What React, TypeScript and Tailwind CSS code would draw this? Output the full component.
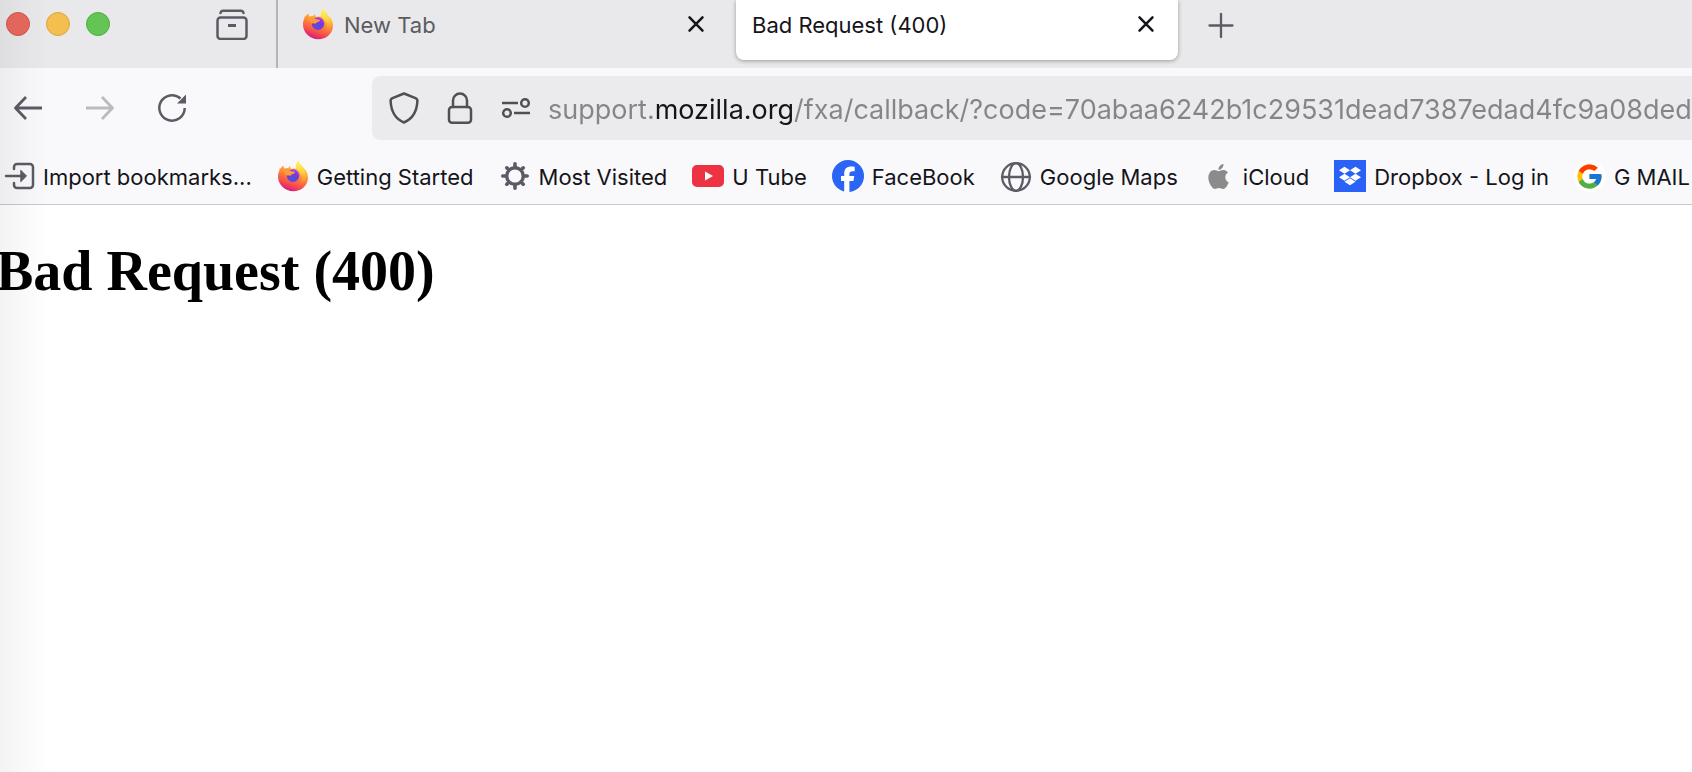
import { useId, type ReactNode } from "react";
import { SiApple, SiDropbox } from "react-icons/si";
import { FcGoogle } from "react-icons/fc";

const pageUrl =
  "support.mozilla.org/fxa/callback/?code=70abaa6242b1c29531dead7387edad4fc9a08ded";

function FirefoxLogo() {
  const id = useId();

  return (
    <svg viewBox="0 0 32 32" className="h-8 w-8 shrink-0" aria-hidden="true">
      <defs>
        <linearGradient id={`${id}body`} x1="0.8" y1="0.05" x2="0.45" y2="1">
          <stop offset="0" stopColor="#fff04a" />
          <stop offset="0.25" stopColor="#ffb938" />
          <stop offset="0.5" stopColor="#ff8a35" />
          <stop offset="0.78" stopColor="#f8504a" />
          <stop offset="1" stopColor="#d81f7c" />
        </linearGradient>
        <linearGradient id={`${id}flame`} x1="0.4" y1="0" x2="0.5" y2="1">
          <stop offset="0" stopColor="#fff65a" />
          <stop offset="0.5" stopColor="#ffcf3c" />
          <stop offset="1" stopColor="#ff8a3a" stopOpacity="0" />
        </linearGradient>
        <radialGradient id={`${id}globe`} cx="0.45" cy="0.75" r="0.7">
          <stop offset="0" stopColor="#5350d8" />
          <stop offset="0.6" stopColor="#7139df" />
          <stop offset="1" stopColor="#a73bea" />
        </radialGradient>
      </defs>
      <path
        fill={`url(#${id}body)`}
        d="M6.300 5.400c.2 1.600.9 2.600 1.800 3.300.8-.4 1.800-.4 2.700-.3.6-1 1.600-1.800 2.600-2.100-.3 1 .1 2.100 1 2.700 1.400-.4 3.200-.6 4.700-.200-.8-3 .4-6.400 2.500-8.300.3 2.700 2.300 4.500 4.300 6.700.6.700 1.100 1.500 1.400 2.300.2-.2.3-.5.3-.9 2.400 3.200 3.600 6.800 3.300 10.300C30.300 25.500 24.300 31.200 16.200 31.200 8.100 31.200 1.300 25 1 17c-.1-2.600.5-5 1.600-7-.1-.9 0-1.500.3-2.200.3.3.5.6.6.9.6-1.300 1.500-2.400 2.800-3.300z"
      />
      <path
        fill={`url(#${id}flame)`}
        d="M21.600.6c.3 2.700 2.300 4.500 4.300 6.700 3.200 3.700 4.200 8.700 2.200 13.200-2 4-5.500 5.600-8.600 5.500 4.500-1.800 6.300-6 5.200-10.200-.7-2.900-3.600-4.700-5.200-7-.9-3 .1-6.300 2.100-8.200z"
      />
      <circle cx="16" cy="15.600" r="6.300" fill={`url(#${id}globe)`} />
      <path
        fill="#ff9a38"
        d="M5 10.800c1.500-1.900 4-2.700 5.900-2.300.5 1.700 2.200 2.600 4.600 2.900 1.500.1 2.600.2 2.600.7 0 1.200-1.700 1.800-3.200 2.300-1 .4-1.500.8-1.600 1.600-1.400-1-2.800-1-3.900-.3-.4-1.600-2.200-3.200-4.400-4.900z"
      />
    </svg>
  );
}

type GlyphProps = {
  className?: string;
  children: ReactNode;
};

function Glyph({ className = "text-[#5b5b66]", children }: GlyphProps) {
  return (
    <svg
      viewBox="0 0 32 32"
      className={`h-8 w-8 shrink-0 ${className}`}
      fill="none"
      stroke="currentColor"
      strokeWidth="2.500"
      strokeLinecap="round"
      strokeLinejoin="round"
      aria-hidden="true"
    >
      {children}
    </svg>
  );
}

function CloseIcon() {
  return (
    <Glyph className="text-[#15141a]">
      <path d="M9.500 9.300l13 13.400M22.500 9.300l-13 13.400" />
    </Glyph>
  );
}

const bookmarks = [
  {
    title: "Import bookmarks...",
    icon: (
      <Glyph>
        <path d="M11 9V7a3 3 0 0 1 3-3h13a3 3 0 0 1 3 3v18a3 3 0 0 1-3 3H14a3 3 0 0 1-3-3v-2M3 16h14" />
        <path d="M18 10.500l5.500 5.500-5.500 5.500z" fill="currentColor" strokeWidth="1" />
      </Glyph>
    ),
  },
  { title: "Getting Started", icon: <FirefoxLogo /> },
  {
    title: "Most Visited",
    icon: (
      <Glyph>
        <circle cx="16" cy="16" r="8.300" strokeWidth="3.400" />
        <path
          strokeWidth="3.600"
          d="M16 3.800v3M16 25.200v3M3.800 16h3M25.200 16h3M7.800 7.800l1.500 1.500M22.700 22.700l1.500 1.500M24.200 7.800l-1.500 1.500M9.300 22.700l-1.500 1.500"
        />
      </Glyph>
    ),
  },
  {
    title: "U Tube",
    icon: (
      <svg viewBox="0 0 32 32" className="h-8 w-8 shrink-0" aria-hidden="true">
        <rect y="5" width="32" height="22" rx="5" fill="#ed3341" />
        <path d="M13 11.500l8 4.500-8 4.500z" fill="#fff" />
      </svg>
    ),
  },
  {
    title: "FaceBook",
    icon: (
      <svg viewBox="0 0 32 32" className="h-8 w-8 shrink-0" aria-hidden="true">
        <circle cx="16" cy="16" r="16" fill="#2a65f6" />
        <path
          fill="#fff"
          d="M12.200 32V21H9v-5h3.200v-2.200c0-5 2.300-7.400 7.200-7.400 1 0 2.600.2 3.300.4v4.400h-1.900c-2.500 0-3.400 1-3.400 3.300V16h4.900l-.9 5h-4v11z"
        />
      </svg>
    ),
  },
  {
    title: "Google Maps",
    icon: (
      <Glyph>
        <g strokeWidth="2.300">
          <circle cx="16" cy="17" r="13.800" />
          <ellipse cx="16" cy="17" rx="7" ry="13.800" />
          <path d="M2 17h28" />
        </g>
      </Glyph>
    ),
  },
  {
    title: "iCloud",
    icon: (
      <span className="flex h-8 w-8 shrink-0 items-center justify-center">
        <SiApple size={25} color="#8b8b8b" />
      </span>
    ),
  },
  {
    title: "Dropbox - Log in",
    icon: (
      <span className="flex h-8 w-8 shrink-0 items-center justify-center bg-[#2a61f6]">
        <SiDropbox size={22} color="#fff" />
      </span>
    ),
  },
  {
    title: "G MAIL",
    icon: (
      <span className="flex h-8 w-8 shrink-0 items-center justify-center rounded-full bg-white">
        <FcGoogle size={29} />
      </span>
    ),
  },
];

function TabStrip() {
  return (
    <div className="flex h-[68px] bg-[#e9e9eb]">
      <div className="flex w-[278px] shrink-0 items-center justify-between border-r-2 border-[#b4b4b7] pr-7 pb-5 pl-1.5">
        <div className="flex gap-4">
          <button
            aria-label="Close window"
            className="h-6 w-6 rounded-full border border-[#d2564c] bg-[#e9695e]"
          />
          <button
            aria-label="Minimize window"
            className="h-6 w-6 rounded-full border border-[#d9a545] bg-[#f5bf4f]"
          />
          <button
            aria-label="Zoom window"
            className="h-6 w-6 rounded-full border border-[#52ab43] bg-[#62c554]"
          />
        </div>
        <button aria-label="Recent browsing">
          <Glyph>
            <rect x="1.500" y="9.500" width="29" height="21.500" rx="3" />
            <path d="M4.500 5c.4-1.500 1.200-2.300 2.500-2.300h18c1.300 0 2.100.8 2.500 2.300" />
            <path d="M12 17.500h8" strokeLinecap="butt" strokeWidth="3" />
          </Glyph>
        </button>
      </div>

      <div className="flex w-[458px] shrink-0 items-center pr-6 pb-5 pl-6">
        <FirefoxLogo />
        <button className="flex-1 pt-0.5 pl-2.5 text-left text-[#5b5b5e]">
          New Tab
        </button>
        <button aria-label="Close New Tab">
          <CloseIcon />
        </button>
      </div>

      <div className="mb-2 flex w-[442px] shrink-0 items-center rounded-b-lg bg-white pr-4 pb-3 pl-4 shadow-[0_1px_4px_rgba(0,0,0,.35)]">
        <button className="flex-1 pt-0.5 text-left">Bad Request (400)</button>
        <button aria-label="Close Bad Request (400)">
          <CloseIcon />
        </button>
      </div>

      <button aria-label="Open a new tab" className="ml-7 pb-4">
        <Glyph>
          <path d="M15 4v23M3.500 15.500h23" strokeWidth="2.300" />
        </Glyph>
      </button>
    </div>
  );
}

function NavBar() {
  return (
    <div className="flex items-center pt-2 pl-3">
      <div className="flex w-[360px] shrink-0 gap-10">
        <button aria-label="Back">
          <Glyph>
            <path
              d="M30 16H4M14 5L3.500 16 14 27"
              strokeLinecap="butt"
              strokeWidth="2.800"
            />
          </Glyph>
        </button>
        <button aria-label="Forward" disabled>
          <Glyph className="text-[#bbbbbe]">
            <path
              d="M2 16h26M18 5l10.500 11L18 27"
              strokeLinecap="butt"
              strokeWidth="2.800"
            />
          </Glyph>
        </button>
        <button aria-label="Reload">
          <Glyph>
            <path d="M28.700 16A12.700 12.700 0 1 1 24.500 6.500" strokeLinecap="butt" />
            <path d="M30 2.500v9h-9z" fill="currentColor" stroke="none" />
          </Glyph>
        </button>
      </div>

      <div className="flex h-16 min-w-0 flex-1 items-center gap-6 rounded-l-lg bg-[#ebebed] pl-4">
        <Glyph className="text-[#505053]">
          <path d="M16 1.500l11.500 4.700c1.500.6 2 1.500 1.900 3C28.800 20 24.500 27 16 30.500 7.500 27 3.200 20 2.600 9.200c-.1-1.500.4-2.400 1.900-3z" />
        </Glyph>
        <Glyph className="text-[#505053]">
          <rect x="5" y="15" width="22" height="15.700" rx="3" />
          <path d="M9 15V8.500a7 7 0 0 1 14 0V15" />
        </Glyph>
        <Glyph className="text-[#505053]">
          <path d="M2 11h16M14 21h16" strokeLinecap="butt" />
          <circle cx="25" cy="11" r="3.800" />
          <circle cx="7" cy="21" r="3.800" />
        </Glyph>
        {/* The site's own domain stands out from the rest of the address */}
        <input
          type="text"
          aria-label="Address"
          defaultValue={pageUrl}
          className="-ml-2 h-16 min-w-0 flex-1 bg-[linear-gradient(90deg,#858587_108px,#15141a_108px,#15141a_246px,#858587_246px)] bg-clip-text pt-0.5 text-[27px] text-transparent outline-none"
        />
      </div>
    </div>
  );
}

function BookmarksBar() {
  return (
    <nav className="flex gap-[25px] overflow-hidden pt-5 pb-3 pl-[3px]">
      {bookmarks.map((bookmark) => (
        <a
          key={bookmark.title}
          href="#"
          className="flex h-8 shrink-0 items-center gap-2 whitespace-nowrap"
        >
          {bookmark.icon}
          <span className="pt-0.5">{bookmark.title}</span>
        </a>
      ))}
    </nav>
  );
}

export default function App() {
  return (
    <div className="relative min-h-screen overflow-hidden bg-white font-['Inter',sans-serif] text-[22px] leading-8 text-[#15141a]">
      <header className="border-b border-[#c8c8cb] bg-[#f9f9fb]">
        <TabStrip />
        <NavBar />
        <BookmarksBar />
      </header>

      <main className="pt-[34px]">
        <h1 className="-ml-1 font-['Liberation_Serif',serif] text-[56px] leading-[64px] font-bold text-black">
          Bad Request (400)
        </h1>
      </main>

      {/* Soft shade along the window's left edge */}
      <div className="pointer-events-none absolute inset-y-0 left-0 w-[52px] bg-linear-to-r from-black/5 via-black/2 to-transparent" />
    </div>
  );
}
